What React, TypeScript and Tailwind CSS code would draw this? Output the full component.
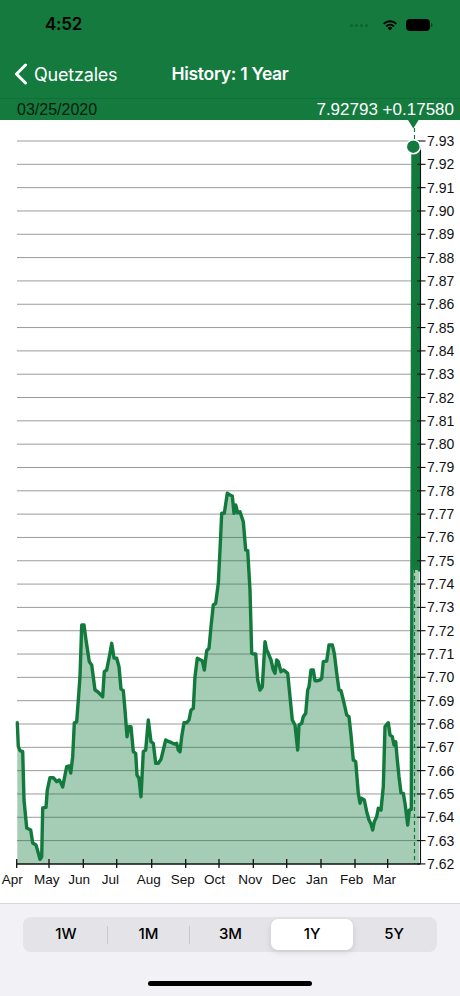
import React from "react";

const PTS =
  "17.3,722.7 18.3,746.7 20,750.7 22.7,751.7 24,800 26.7,828 30.7,830 32.7,843 36,845 38.3,853 40,859.3 41.7,856.7 42.7,808 46,807.3 47.3,790 50,777.7 53.3,777.7 56.7,781.7 59.3,780 61,783 62.7,787 65,775 66.7,766.7 69.3,766 70.7,773 72.7,756.7 74.3,723 76.7,721.7 78.3,700 80,676.7 81.7,625 84,625 86,640 89.3,661.7 91.7,665 95,690 97.7,691.7 100,694 102.7,696.7 104.3,671.7 106.7,670 110,653 111.7,643.3 114,658 116.7,658.3 119,666.7 121,689 123.3,690.7 125,710 127,736.7 129,726.7 131,726.7 133.3,751.7 135.7,753.3 137,775 139,778.3 141,796.7 143.3,751.7 145.7,750 148.3,720 151,741.7 153.3,743.3 155.7,763.3 158.3,763.3 161,759.3 163.3,750 165.7,740 169,741.7 171.7,742.7 174.3,744 176.7,743.3 178.3,750 180,751.7 181.7,736.7 184,722.7 186.7,722.7 189,720 191,710 193.3,708.3 195,676.7 197.3,658.3 199.3,659.3 202.3,660.7 204.3,670 206.7,650.7 209,648.3 211,626.7 213.3,605 215.7,603.3 218.3,583.3 220,550 221.7,513.3 224.3,513.3 227.3,493.3 230,495 232.3,496 234,513.3 235.7,505 237.7,512.7 240,511.7 243.3,521.7 245.7,550 247.7,550.7 250,590 251.7,653.3 253.3,654 255.7,654 257.7,680 260,690 262.3,686.7 265,641.7 266.7,650 268.3,653.3 271,660 273.3,670 275,673.3 276.7,660 278.3,661.7 281,671.7 283.3,670 285.7,671.7 287.7,673.3 290,696.7 292.3,720 295,725 297.7,750 299,725 301.7,723.3 303.3,716.7 305.7,713.3 307.7,690 309,686.7 311,670 313.3,670 315,680.7 317.7,680.7 320,680 321.7,678.3 323.3,661.7 326.7,661 329,645 332.3,645 334.3,653.3 336.7,673.3 339,690 341,690.7 343.3,700 345,707.3 346.7,715 349,716.7 351,735 353.3,760 355.7,761.7 358.3,793.3 360,803.3 361.7,798.3 364.3,800 366.7,811.7 369,820 371,824 372.7,830 374.3,821.7 376.7,816.7 378.3,808.3 381,810 383.3,786.7 385,726.7 388.3,722.7 390,735 392.3,736.7 394,745 395.7,741.7 397.3,760 399,776.7 401,792.7 403.3,793.3 405,803.3 407.7,825 409.3,810 411.3,809.3 413,147 419.3,147 419.3,570";

const GREEN = "#137a3d";
const MONTHS: [string, number][] = [
  ["Apr", 16.7],
  ["May", 49],
  ["Jun", 83.3],
  ["Jul", 116.7],
  ["Aug", 151.7],
  ["Sep", 185.7],
  ["Oct", 219],
  ["Nov", 253.3],
  ["Dec", 286.7],
  ["Jan", 321],
  ["Feb", 355],
  ["Mar", 387.7],
];

const Y0 = 141;
const STEP = 23.32;
const AXIS_Y = 864;

function Chart() {
  const levels = Array.from({ length: 32 }, (_, k) => ({
    label: (7.93 - k * 0.01).toFixed(2),
    y: Y0 + k * STEP,
  }));
  const fillPts = PTS + " 419.3," + AXIS_Y + " 17.3," + AXIS_Y;
  return (
    <svg
      className="block"
      width={460}
      height={783}
      viewBox="0 120 460 783"
      style={{ fontFamily: "'Liberation Sans', Arial, sans-serif" }}
    >
      {levels.slice(0, 31).map((l) => (
        <line key={"g" + l.label} x1={17} x2={420} y1={l.y} y2={l.y} stroke="#9b9b9b" strokeWidth={1} />
      ))}
      <line x1={414.5} x2={414.5} y1={128} y2={AXIS_Y} stroke={GREEN} strokeWidth={1.2} strokeDasharray="4 3" />
      <polygon points={fillPts} fill={GREEN} fillOpacity={0.38} />
      <rect x={413} y={147} width={6.3} height={423} fill={GREEN} />
      <polyline points={PTS} fill="none" stroke={GREEN} strokeWidth={3.4} strokeLinejoin="round" strokeLinecap="round" />
      <line x1={17} x2={420.5} y1={AXIS_Y} y2={AXIS_Y} stroke="#111" strokeWidth={1.3} />
      <line x1={420.5} x2={420.5} y1={150} y2={AXIS_Y} stroke="#111" strokeWidth={1.1} />
      {MONTHS.map(([m, x]) => (
        <g key={m}>
          <line x1={x} x2={x} y1={859} y2={868} stroke="#111" strokeWidth={1.3} />
          <text x={x - 15} y={883.5} fontSize={13.5} fill="#111">
            {m}
          </text>
        </g>
      ))}
      {levels.map((l) => (
        <g key={"l" + l.label}>
          <line x1={417} x2={425.5} y1={l.y} y2={l.y} stroke="#111" strokeWidth={1.1} />
          <text x={427} y={l.y + 5} fontSize={14} fill="#111">
            {l.label}
          </text>
        </g>
      ))}
      <circle cx={413.3} cy={146.7} r={7} fill={GREEN} stroke="#fff" strokeWidth={1.5} />
      <polygon points="408,120 418.6,120 413.3,128.5" fill={GREEN} />
    </svg>
  );
}

function StatusBar() {
  return (
    <div className="h-[44px] flex items-center pt-[6px] pl-[45px] pr-[27px] justify-between">
      <span className="text-[17px] font-semibold text-black font-[Inter] tracking-[-0.2px]">4:52</span>
      <div className="flex items-center gap-[8px]">
        <div className="flex items-end gap-[2px] mr-[6px] opacity-20">
          <span className="w-[3px] h-[3px] rounded-full bg-black" />
          <span className="w-[3px] h-[3px] rounded-full bg-black" />
          <span className="w-[3px] h-[3px] rounded-full bg-black" />
          <span className="w-[3px] h-[3px] rounded-full bg-black" />
        </div>
        <svg width="16" height="12" viewBox="0 0 16 12">
          <path d="M8 11.5 L5.6 8.9 A3.5 3.5 0 0 1 10.4 8.9 Z" fill="#000" />
          <path d="M3.4 6.7 A6.6 6.6 0 0 1 12.6 6.7 L11.3 8 A4.8 4.8 0 0 0 4.7 8 Z" fill="#000" />
          <path d="M1 4.2 A10 10 0 0 1 15 4.2 L13.7 5.5 A8.2 8.2 0 0 0 2.3 5.5 Z" fill="#000" />
        </svg>
        <svg width="27" height="12" viewBox="0 0 27 12">
          <rect x="0.5" y="0.5" width="23" height="11" rx="3" fill="#000" stroke="#000" />
          <path d="M25 4 Q26.5 4 26.5 6 Q26.5 8 25 8 Z" fill="#000" opacity="0.5" />
        </svg>
      </div>
    </div>
  );
}

function NavBar() {
  return (
    <div className="h-[54px] pt-[6px] grid grid-cols-[1fr_auto_1fr] items-center">
      <div className="flex items-center pl-[14px] gap-[6px]">
        <svg width="14" height="22" viewBox="0 0 14 22">
          <path d="M11.5 2 L2.5 11 L11.5 20" fill="none" stroke="#fff" strokeWidth="3" strokeLinecap="round" strokeLinejoin="round" />
        </svg>
        <span className="text-white text-[18px] font-[Inter] tracking-[-0.2px]">Quetzales</span>
      </div>
      <span className="text-white text-[17.5px] font-semibold font-[Inter] tracking-[-0.3px]">History: 1 Year</span>
      <div />
    </div>
  );
}

function Segmented() {
  const items = ["1W", "1M", "3M", "1Y", "5Y"];
  const sel = 3;
  return (
    <div className="mx-[23px] mt-[13px] h-[35px] rounded-[8px] bg-[#e3e3e8] flex p-[2px]">
      {items.map((it, i) => (
        <div key={it} className="flex-1 flex items-center relative">
          {i > 0 && i !== sel && i - 1 !== sel ? <span className="w-px h-[18px] bg-[#c8c8cd]" /> : null}
          <div
            className={
              "flex-1 h-full flex items-center justify-center text-[15px] font-medium font-[Inter] text-black rounded-[7px] " +
              (i === sel ? "bg-white shadow-[0_2px_6px_rgba(0,0,0,0.12)]" : "")
            }
          >
            {it}
          </div>
        </div>
      ))}
    </div>
  );
}

export default function App() {
  return (
    <div className="w-[460px] h-[996px] flex flex-col bg-white overflow-hidden">
      <div className="bg-[#147a3e]">
        <StatusBar />
        <NavBar />
        <div className="h-[22px] border-t border-[#10703a] flex items-center justify-between pl-[17px] pr-[6px] font-['Liberation_Sans',Arial,sans-serif]">
          <span className="text-[16px] text-[#0b1a10]">03/25/2020</span>
          <span className="text-[17px] text-white">7.92793 +0.17580</span>
        </div>
      </div>
      <Chart />
      <div className="flex-1 bg-[#f1f1f6] border-t border-[#d6d6db] flex flex-col">
        <Segmented />
        <div className="flex-1" />
        <div className="mx-auto mb-[10px] w-[164px] h-[5px] rounded-full bg-black" />
      </div>
    </div>
  );
}
